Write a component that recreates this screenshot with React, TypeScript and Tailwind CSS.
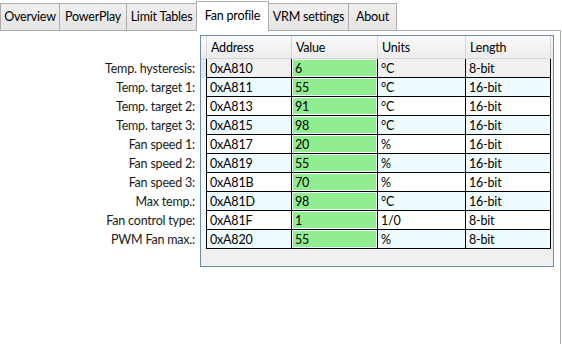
import React from "react";

const FONT = { fontFamily: '"Segoe UI", Lato, "Open Sans", sans-serif' };

interface Row {
  label: string;
  address: string;
  value: string;
  units: string;
  length: string;
}

const ROWS: Row[] = [
  { label: "Temp. hysteresis:", address: "0xA810", value: "6", units: "°C", length: "8-bit" },
  { label: "Temp. target 1:", address: "0xA811", value: "55", units: "°C", length: "16-bit" },
  { label: "Temp. target 2:", address: "0xA813", value: "91", units: "°C", length: "16-bit" },
  { label: "Temp. target 3:", address: "0xA815", value: "98", units: "°C", length: "16-bit" },
  { label: "Fan speed 1:", address: "0xA817", value: "20", units: "%", length: "16-bit" },
  { label: "Fan speed 2:", address: "0xA819", value: "55", units: "%", length: "16-bit" },
  { label: "Fan speed 3:", address: "0xA81B", value: "70", units: "%", length: "16-bit" },
  { label: "Max temp.:", address: "0xA81D", value: "98", units: "°C", length: "16-bit" },
  { label: "Fan control type:", address: "0xA81F", value: "1", units: "1/0", length: "8-bit" },
  { label: "PWM Fan max.:", address: "0xA820", value: "55", units: "%", length: "8-bit" },
];

const TABS = [
  { name: "Overview", w: "w-[60px]" },
  { name: "PowerPlay", w: "w-[68px]" },
  { name: "Limit Tables", w: "w-[71px]" },
  { name: "Fan profile", w: "w-[73px]", active: true },
  { name: "VRM settings", w: "w-[81px]" },
  { name: "About", w: "w-[49px]" },
];

// row backgrounds: first row is the (unfocused) selected one, then alternating
const rowBg = (i: number) => {
  if (i === 0) return "bg-[#f0f0f0]";
  return i % 2 === 1 ? "bg-[#eefbfe]" : "bg-white";
};

export default function App() {
  return (
    <div
      className="w-[562px] h-[344px] bg-white overflow-hidden text-[12.5px] tracking-[-0.2px] text-black"
      style={FONT}
    >
      {/* Tab strip */}
      <div className="flex items-end h-[30px]">
        {TABS.map((t, i) =>
          t.active ? (
            <div
              key={t.name}
              className={`${t.w} ${i > 0 ? "-ml-px" : ""} h-[30px] -mb-px relative z-10 bg-white border border-b-0 border-[#acacac] flex items-center justify-center pb-[1px]`}
            >
              {t.name}
            </div>
          ) : (
            <div
              key={t.name}
              className={`${t.w} ${i > 0 ? "-ml-px" : ""} h-[27px] bg-gradient-to-b from-[#f0f0f0] to-[#e5e5e5] border border-b-0 border-[#acacac] flex items-center justify-center`}
            >
              {t.name}
            </div>
          )
        )}
      </div>

      {/* Tab content */}
      <div className="w-[561px] h-[340px] border-t border-r border-[#acacac] pl-px pt-[4px] flex">
        {/* Labels */}
        <div className="w-[194px] pt-[24px] flex flex-col items-end shrink-0">
          {ROWS.map((r) => (
            <div key={r.label} className="h-[19px] leading-[19px] whitespace-nowrap text-[#1a1a1a]">
              {r.label}
            </div>
          ))}
        </div>

        {/* Data grid */}
        <div className="ml-[5px] w-[354px] h-[232px] border border-[#688caf] bg-[#f0f0f0] flex flex-col">
          {/* Header */}
          <div className="flex h-[23px] bg-gradient-to-b from-[#fafafa] to-[#ececec] border-b border-[#d5d5d5]">
            <div className="w-[6px] border-r border-[#d5d5d5]" />
            <div className="w-[85px] border-r border-[#d5d5d5] pl-[4px] leading-[23px]">Address</div>
            <div className="w-[86px] border-r border-[#d5d5d5] pl-[4px] leading-[23px]">Value</div>
            <div className="w-[88px] border-r border-[#d5d5d5] pl-[4px] leading-[23px]">Units</div>
            <div className="w-[85px] border-r border-[#d5d5d5] pl-[4px] leading-[23px]">Length</div>
            <div className="flex-1" />
          </div>

          {/* Rows */}
          {ROWS.map((r, i) => (
            <div key={r.address} className="flex h-[19px]">
              <div
                className={`w-[6px] border-r border-black ${
                  i === 0 ? "bg-[#dbe9f6]" : "bg-[#f4f8fb]"
                }`}
              />
              <div className={`flex w-[344px] border-b border-black ${rowBg(i)}`}>
                <div className="w-[85px] border-r border-black pl-[3px] leading-[19px]">{r.address}</div>
                <div className="w-[86px] border-r border-black p-px">
                  <div className="h-full bg-[#90ee90] pl-[2px] leading-[17px]">{r.value}</div>
                </div>
                <div className="w-[88px] border-r border-black pl-[3px] leading-[19px]">{r.units}</div>
                <div className="w-[85px] border-r border-black pl-[3px] leading-[19px]">{r.length}</div>
              </div>
              <div className="flex-1 bg-[#f0f0f0]" />
            </div>
          ))}
        </div>
      </div>
    </div>
  );
}
